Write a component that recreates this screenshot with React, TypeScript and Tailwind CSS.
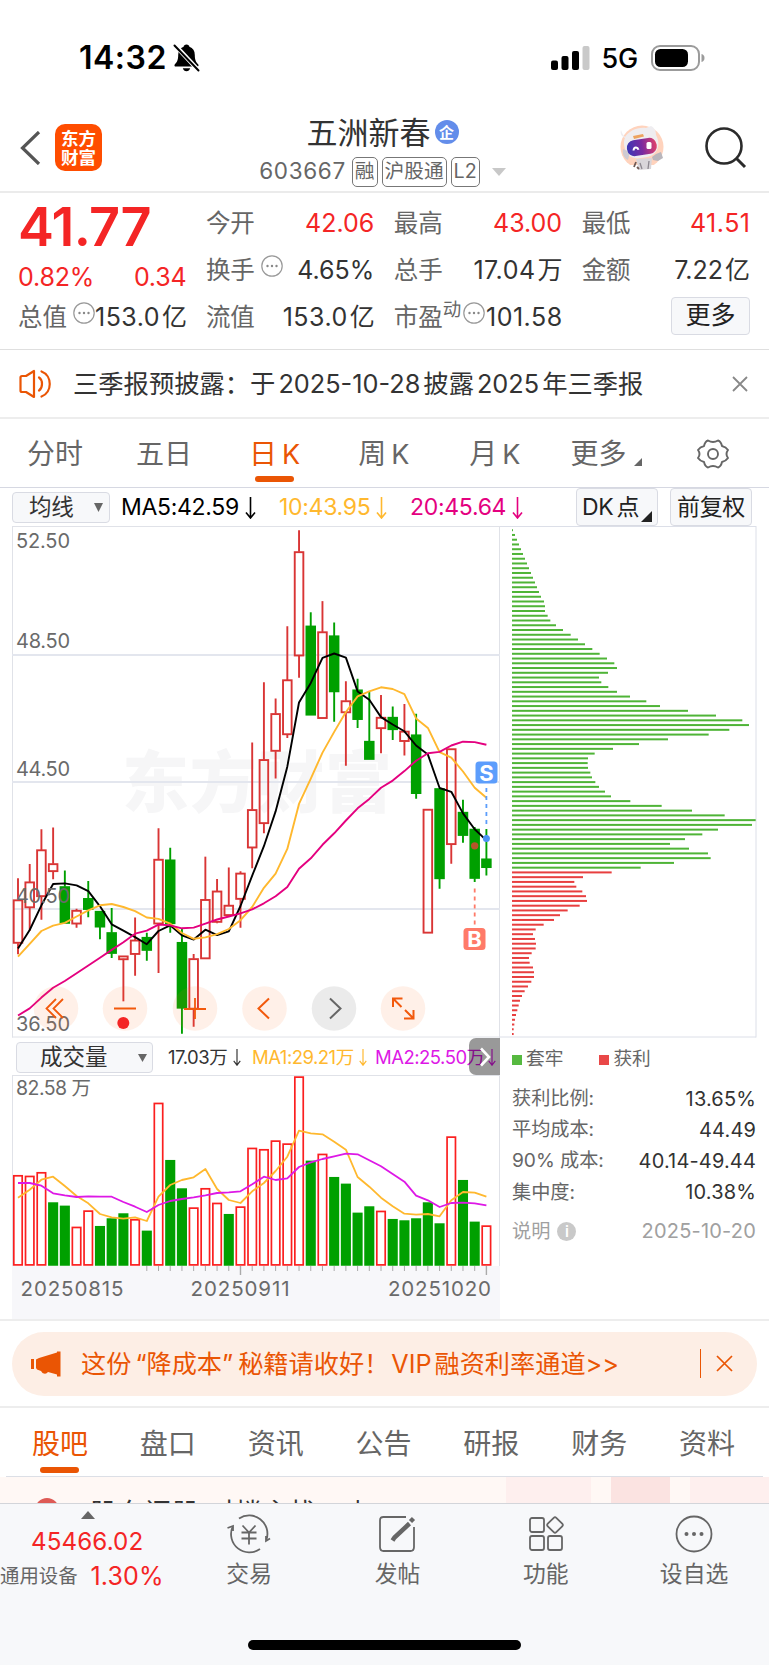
import type { ReactNode } from "react";
import clsx from "clsx";

/**
 * Stock detail page: quote header, daily K chart with chip distribution,
 * volume chart and the bottom toolbar.
 */

// [high, bodyTop, bodyBottom, low, up] in chart units, top to bottom
type Candle = [number, number, number, number, 0 | 1];

const CANDLES: Candle[] = [
  [1060, 1124, 1252, 1285, 1], [1018, 1071, 1147, 1215, 1], [915, 976, 1114, 1183, 1], [910, 1017, 1040, 1063, 1],
  [1037, 1085, 1193, 1193, 0], [1150, 1155, 1195, 1206, 1], [1068, 1120, 1152, 1175, 0], [1158, 1158, 1204, 1240, 0],
  [1148, 1221, 1282, 1296, 0], [1290, 1290, 1298, 1424, 1], [1176, 1243, 1285, 1348, 1], [1221, 1235, 1273, 1304, 0],
  [912, 1004, 1195, 1340, 1], [970, 1006, 1194, 1221, 0], [1208, 1250, 1444, 1520, 0], [1284, 1298, 1447, 1499, 1],
  [996, 1123, 1298, 1298, 1], [1062, 1098, 1190, 1193, 1], [1028, 1140, 1170, 1170, 1], [1039, 1045, 1122, 1206, 1],
  [658, 857, 970, 1030, 1], [480, 709, 898, 927, 1], [528, 573, 684, 765, 1], [314, 473, 635, 645, 1],
  [30, 94, 402, 467, 1], [273, 314, 577, 577, 0], [240, 331, 587, 587, 1], [303, 343, 508, 597, 0],
  [477, 535, 570, 727, 1], [470, 503, 590, 615, 0], [508, 655, 708, 708, 0], [518, 584, 617, 690, 1],
  [552, 584, 620, 651, 0], [544, 625, 655, 697, 1], [573, 636, 809, 825, 0], [856, 856, 1222, 1222, 1],
  [795, 795, 1061, 1091, 0], [677, 677, 960, 1017, 1], [828, 865, 933, 955, 0], [908, 915, 1060, 1071, 0],
  [914, 1003, 1028, 1052, 0],
];

const MA5 = [
  1268, 1213, 1140, 1077, 1075, 1081, 1098, 1143, 1196, 1215, 1234, 1255, 1216, 1199, 1229, 1241, 1212, 1228, 1217, 1142,
  1052, 965, 862, 730, 540, 482, 408, 395, 407, 507, 532, 583, 605, 625, 667, 694, 793, 804, 868, 915, 948,
];
const MA10 = [
  1292, 1254, 1216, 1200, 1192, 1173, 1155, 1140, 1136, 1145, 1157, 1176, 1180, 1194, 1222, 1239, 1235, 1225, 1210, 1184,
  1145, 1088, 1046, 973, 840, 765, 688, 627, 568, 522, 507, 495, 500, 515, 587, 615, 687, 703, 744, 792, 822,
];
const MA20 = [
  1466, 1445, 1413, 1384, 1364, 1341, 1318, 1295, 1272, 1249, 1224, 1215, 1197, 1199, 1208, 1206, 1194, 1182, 1173, 1164,
  1152, 1134, 1113, 1086, 1032, 1001, 961, 927, 889, 853, 825, 792, 771, 743, 712, 690, 686, 667, 656, 657, 665,
];

const CHIPS_LOSS = [
  69, 75, 81, 87, 93, 99, 105, 111, 117, 123, 129, 135, 141, 147, 153, 162, 165, 165, 173, 181, 198, 219, 242, 264, 285,
  307, 329, 351, 373, 381, 354, 327, 334, 355, 381, 420, 469, 510, 594, 678, 757, 777, 718, 656, 534, 447, 369, 314, 294,
  293, 294, 301, 306, 316, 327, 345, 363, 421, 515, 606, 704, 797, 786, 684, 637, 585, 540, 597, 654, 662, 552, 452,
];
const CHIPS_GAIN = [
  365, 279, 253, 259, 277, 288, 291, 269, 233, 210, 192, 161, 137, 129, 135, 138, 137, 125, 117, 119, 129, 132, 132, 124,
  114, 104, 96, 90, 86, 82, 78, 75, 73, 71, 71,
];

// Bar tops; VOL_UP lists the hollow ones
const VOLUME = [
  435, 437, 426, 517, 527, 590, 541, 588, 565, 550, 567, 602, 218, 390, 475, 532, 474, 518, 552, 529, 353, 357, 331, 340,
  139, 392, 371, 441, 461, 548, 529, 542, 567, 571, 565, 517, 580, 319, 450, 575, 586,
];
const VOL_UP = [0, 1, 2, 5, 6, 10, 12, 15, 16, 17, 19, 20, 21, 22, 23, 24, 26, 31, 37, 40];
const VOL_MA1 = [
  503, 479, 449, 440, 468, 498, 520, 552, 562, 566, 562, 573, 500, 465, 450, 442, 417, 477, 510, 519, 484, 459, 423, 380,
  302, 310, 313, 335, 359, 441, 470, 503, 529, 551, 554, 552, 559, 511, 486, 488, 500,
];
const VOL_MA2 = [
  459, 459, 467, 490, 496, 501, 499, 500, 500, 516, 530, 546, 525, 513, 507, 502, 496, 489, 487, 484, 463, 440, 450, 445,
  411, 397, 387, 379, 371, 373, 391, 409, 432, 455, 497, 511, 531, 519, 518, 520, 526,
];

const STEP = 11.71;
const cx = (i: number) => 6 + i * STEP;
const ky = (v: number) => v / 2.9585 - 6;
const vy = (v: number) => (v - 135) / 3;
const points = (values: number[], y: (v: number) => number) =>
  values.map((v, i) => `${cx(i).toFixed(1)},${y(v).toFixed(1)}`).join(" ");

const FONT = "font-[Inter,'Noto_Sans_CJK_SC',sans-serif]";

function StatusBar() {
  return (
    <div className="flex h-[100px] items-center justify-between pr-[64px] pl-[79px] pt-[15px] text-black">
      <div className="flex items-center gap-[6px]">
        <span className="text-[32px] leading-none font-semibold tracking-[0.500px]">14:32</span>
        <svg width="27" height="28" viewBox="0 0 27 28">
          <path
            d="M13.5 0.5c-1.7 0-2.7 1-2.9 2.2C7 3.9 5.200 6.700 5.200 11c0 5.500-1.500 7.300-3.300 9.200-.9 1-.5 2.400 1 2.400h21.200c1.500 0 1.900-1.400 1-2.400-1.800-1.900-3.300-3.700-3.300-9.200 0-4.300-1.800-7.100-5.400-8.300C16.200 1.500 15.200.5 13.500.5zM9.800 24.200c.6 1.900 1.900 3 3.700 3s3.100-1.100 3.700-3z"
          />
          <path d="M0 -1L28 29" stroke="#fff" strokeWidth="4.500" />
          <path d="M1.500 1.500L25.500 26.500" stroke="#000" strokeWidth="2" strokeLinecap="round" />
        </svg>
      </div>
      <div className="flex items-center">
        <svg width="39" height="24" viewBox="0 0 39 24">
          <rect x="0" y="14.500" width="7" height="9.500" rx="2" />
          <rect x="10.500" y="10" width="7" height="14" rx="2" />
          <rect x="21" y="5" width="7" height="19" rx="2" />
          <rect x="31.500" y="0" width="7" height="24" rx="2" fill="#c9c9c9" />
        </svg>
        <span className="ml-[12px] pt-[2px] text-[27px] leading-none font-medium tracking-[-0.200px]">5G</span>
        <svg width="54" height="26" viewBox="0 0 54 26" className="ml-[13px]">
          <rect x="1" y="1" width="47" height="24" rx="8" fill="none" stroke="#9b9b9b" strokeWidth="2" />
          <rect x="4" y="4" width="33" height="18" rx="5.500" />
          <path d="M50.500 9v8c2-.6 3-2 3-4s-1-3.400-3-4z" fill="#9b9b9b" />
        </svg>
      </div>
    </div>
  );
}

function Robot() {
  return (
    <svg width="46" height="46" viewBox="0 0 46 46">
      <defs>
        <linearGradient id="visor" x1="0" x2="1">
          <stop offset="0" stopColor="#3c35b5" />
          <stop offset=".5" stopColor="#7a2aa0" />
          <stop offset="1" stopColor="#e0406a" />
        </linearGradient>
      </defs>
      <circle cx="23" cy="22" r="21.500" fill="#ffd3bd" />
      <path d="M11 40h27l-2 6H14z" fill="#fff" />
      <path d="M17 34l16-1-1 11-12 1z" fill="#d9d6da" />
      <path d="M21 38l2 6M30 36l-1 8" stroke="#8d8890" strokeWidth="1.300" />
      <path d="M33 32l4-3 5-2 2 6-5 3-5-1z" fill="#b9b6bc" />
      <path d="M17 37l-2 5M18 42l2 2" stroke="#6f5a55" strokeWidth="1.800" />
      <path d="M2 5c1 3 2 5 4 7C10 6 18 2 27 3l5-2c4 2 5 6 5 9 5 9 2 20-9 22-8 2-17 2-20-4-3-5-4-11-2-15C2 11 1 8 2 5z" fill="#efedf0" />
      <path d="M4 24c-1 5 1 9 5 11l2-8z" fill="#cfcbd2" />
      <path d="M14 11l10-2 1 2.500-10 2.500z" fill="#eda35f" />
      <rect x="8" y="14" width="30" height="16" rx="7.500" fill="url(#visor)" transform="rotate(-9 23 23)" />
      <path d="M14.500 25.500c.5-4 4-4 5 -.8" fill="none" stroke="#fff" strokeWidth="2" />
      <rect x="27.500" y="17" width="5" height="7" rx="1.500" fill="#fff" />
    </svg>
  );
}

function Tag({ children }: { children: ReactNode }) {
  return (
    <span className="flex h-[30px] items-center rounded-[5px] border border-[#777] px-[2px] text-[19.700px] leading-none text-[#666]">
      {children}
    </span>
  );
}

function Header() {
  return (
    <header className="flex h-[93px] items-center border-b-2 border-[#ebebeb] pr-[22px] pl-[20px] pt-[4px]">
      <div className="flex w-[148px] items-center gap-[14px]">
        <svg width="21" height="34" viewBox="0 0 21 34" fill="none" stroke="#555" strokeWidth="3.200">
          <path d="M19 1L2.500 17L19 33" />
        </svg>
        <div className="flex h-[47px] w-[47px] flex-col items-center justify-center rounded-[10px] bg-[#ff4d00] text-[17.500px] leading-[19px] font-bold text-white">
          <span>东方</span>
          <span>财富</span>
        </div>
      </div>
      <div className="flex flex-1 flex-col items-center pt-[7px]">
        <div className="flex h-[41px] items-center gap-[4px] text-[31px] leading-none text-[#333]">
          五洲新春
          <span className="flex size-[24px] items-center justify-center rounded-full bg-[#638dea] text-[15px] font-bold text-white">
            企
          </span>
        </div>
        <div className="flex h-[38px] items-center text-[22.500px] leading-none tracking-[0.650px] text-[#666]">
          <span className="mr-[6px]">603667</span>
          <div className="flex gap-[4px] tracking-normal">
            <Tag>融</Tag>
            <Tag>沪股通</Tag>
            <Tag>L2</Tag>
          </div>
          <svg width="14" height="8" viewBox="0 0 14 8" fill="#c8c8c8" className="ml-[12px]">
            <path d="M0 0h14L7 8z" />
          </svg>
        </div>
      </div>
      <div className="flex w-[150px] items-center justify-end gap-[40px]">
        <Robot />
        <svg width="42" height="42" viewBox="0 0 42 42" fill="none" stroke="#2b2b2b" strokeWidth="2.600">
          <circle cx="19" cy="19" r="17.500" />
          <path d="M31 31L40 40" strokeWidth="3" />
        </svg>
      </div>
    </header>
  );
}

function Hint() {
  return (
    <svg width="22" height="22" viewBox="0 0 22 22" className="shrink-0">
      <circle cx="11" cy="11" r="10.200" fill="none" stroke="#999" strokeWidth="1.200" />
      <g fill="#888">
        <circle cx="6.500" cy="11" r="1.200" />
        <circle cx="11" cy="11" r="1.200" />
        <circle cx="15.500" cy="11" r="1.200" />
      </g>
    </svg>
  );
}

type StatProps = { label: string; value: string; unit?: string; hint?: boolean; sup?: string; red?: boolean };

function Stat({ label, value, unit, hint, sup, red }: StatProps) {
  return (
    <div className="flex h-[47px] items-center justify-between whitespace-nowrap">
      <span className="flex items-center text-[24.500px] text-[#666]">
        {label}
        {sup && <span className="mb-[16px] text-[18.500px] leading-none">{sup}</span>}
        {hint && <span className={clsx("mb-[10px]", sup ? "ml-[2px]" : "ml-[6px]")}><Hint /></span>}
      </span>
      <span
        className={clsx(
          "text-[25px]",
          value.includes("1") ? "-mr-[0.500px] tracking-[0.500px]" : "tracking-[0px]",
          red ? "text-[#f42525]" : "text-[#333]",
        )}
      >
        {value}
        {unit && <span className="ml-[2px] tracking-normal">{unit}</span>}
      </span>
    </div>
  );
}

function Quote() {
  return (
    <section className="grid h-[157px] grid-cols-4 gap-x-[19.500px] border-b border-[#dfdfdf] pr-[19px] pl-[18px] pt-[7px]">
      <div>
        <div className="h-[61px] text-[54px] leading-[54px] font-semibold tracking-[-0.700px] text-[#f42525]">41.77</div>
        <div className="flex h-[33px] items-center justify-between text-[25px] tracking-[-0.200px] text-[#f42525]">
          <span>0.82%</span>
          <span>0.34</span>
        </div>
        <Stat label="总值" value="153.0" unit="亿" hint />
      </div>
      <div>
        <Stat label="今开" value="42.06" red />
        <Stat label="换手" value="4.65%" hint />
        <Stat label="流值" value="153.0" unit="亿" />
      </div>
      <div>
        <Stat label="最高" value="43.00" red />
        <Stat label="总手" value="17.04" unit="万" />
        <Stat label="市盈" sup="动" value="101.58" hint />
      </div>
      <div>
        <Stat label="最低" value="41.51" red />
        <Stat label="金额" value="7.22" unit="亿" />
        <div className="flex h-[43px] items-center justify-end">
          <button className="h-[38px] w-[79px] rounded-[4px] border border-[#d9dbe3] bg-[#f7f8fa] text-[25px] leading-none text-[#222]">
            更多
          </button>
        </div>
      </div>
    </section>
  );
}

function Notice() {
  return (
    <section className="flex h-[69px] items-center border-b-2 border-[#ededed] pr-[21px] pl-[19px]">
      <svg width="34" height="30" viewBox="0 0 34 30" fill="none" stroke="#ea5504" strokeWidth="2.200" strokeLinejoin="round">
        <path d="M1.500 8.500Q1.500 7 3 7H7L15 2V28L7 23H3Q1.500 23 1.500 21.500Z" />
        <path d="M20 8.500c4 2.500 4 10.500 0 13M22.500 2.500c11 4 11 21 0 25" strokeLinecap="round" />
      </svg>
      <span className="ml-[20px] text-[25.300px] text-[#333]">
        三季报预披露：于<span className="mx-[3px]">2025-10-28</span>披露<span className="mx-[3px]">2025</span>年三季报
      </span>
      <svg width="16" height="16" viewBox="0 0 16 16" stroke="#888" strokeWidth="1.800" className="ml-auto">
        <path d="M1 1L15 15M15 1L1 15" />
      </svg>
    </section>
  );
}

function PeriodTabs() {
  return (
    <nav className="flex h-[69px] items-center border-b border-[#d6d8e2] pr-[40px] pl-[27px] pt-px text-[28px] leading-none whitespace-nowrap text-[#666]">
      <span>分时</span>
      <span className="ml-[53px]">五日</span>
      <span className="relative ml-[57px] text-[#ea5504]">
        日<span className="ml-[5px] text-[27px]">K</span>
        <i className="absolute -bottom-[14px] left-[6px] h-[6px] w-[39px] rounded-full bg-[#ea5504]" />
      </span>
      <span className="ml-[58px]">周<span className="ml-[5px] text-[27px]">K</span></span>
      <span className="ml-[60px]">月<span className="ml-[5px] text-[27px]">K</span></span>
      <span className="ml-[50px]">更多</span>
      <svg width="8" height="8" viewBox="0 0 8 8" fill="#666" className="mt-[17px] ml-[7px]">
        <path d="M8 0V8H0z" />
      </svg>
      <svg width="32" height="30" viewBox="0 0 32 30" fill="none" stroke="#666" strokeWidth="1.900" strokeLinejoin="round" className="ml-auto">
        <path d="M11 1.500Q16 4.500 21 1.500Q24 2.500 25 7Q29 8 31 11Q28 15 31 19Q29 22 25 23Q24 27.500 21 28.500Q16 25.500 11 28.500Q8 27.500 7 23Q3 22 1 19Q4 15 1 11Q3 8 7 7Q8 2.500 11 1.500Z" />
        <circle cx="16" cy="15" r="5" />
      </svg>
    </nav>
  );
}

function DownArrow({ small }: { small?: boolean }) {
  return (
    <svg
      width={small ? 8 : 11}
      height={small ? 17 : 22}
      viewBox="0 0 11 22"
      fill="none"
      stroke="currentColor"
      strokeWidth="1.600"
      preserveAspectRatio="none"
    >
      <path d="M5.500 0V21M1 15.500L5.500 21L10 15.500" />
    </svg>
  );
}

function MaBar() {
  return (
    <div className="flex h-[38px] items-center pr-[17px] pl-[12px] text-[23px] leading-none tracking-[-0.300px] whitespace-nowrap">
      <button className="flex h-[31px] w-[98px] items-center justify-between rounded-[4px] border border-[#d9dbe3] bg-[#f7f8fa] pr-[6px] pl-[16px] text-[22.500px] leading-none text-[#333]">
        均线
        <svg width="9" height="9" viewBox="0 0 9 9" fill="#666"><path d="M0 0h9L4.500 9z" /></svg>
      </button>
      <span className="ml-[11px] flex w-[158px] items-center gap-[6px] pt-px text-black">MA5:42.59<DownArrow /></span>
      <span className="flex w-[131px] items-center gap-[6px] pt-px text-[#ffb82e]">10:43.95<DownArrow /></span>
      <span className="flex items-center gap-[6px] pt-px text-[#e4007f]">20:45.64<DownArrow /></span>
      <button className="relative ml-auto h-[38px] w-[82px] rounded-[4px] border border-[#d9dbe3] bg-[#f7f8fa] pr-[13px] text-[23px] leading-none text-[#222]">
        DK<span className="ml-[3px]">点</span>
        <svg width="11" height="11" viewBox="0 0 11 11" fill="#222" className="absolute right-[5px] bottom-[3px]">
          <path d="M11 0V11H0z" />
        </svg>
      </button>
      <button className="ml-[12px] h-[38px] w-[82px] rounded-[4px] border border-[#d9dbe3] bg-[#f7f8fa] text-[23px] leading-none text-[#222]">
        前复权
      </button>
    </div>
  );
}

const AXIS = [
  { label: "52.50", y: 22 },
  { label: "48.50", y: 122 },
  { label: "44.50", y: 250 },
  { label: "40.50", y: 376.5 },
  { label: "36.50", y: 504.5 },
];

function Marker({ x, y, color, label }: { x: number; y: number; color: string; label: string }) {
  return (
    <g>
      <rect x={x - 11} y={y - 11} width="22" height="22" rx="3.500" fill={color} />
      <text x={x} y={y + 8} textAnchor="middle" fontSize="22" fontWeight="700" fill="#fff">{label}</text>
    </g>
  );
}

function KChart() {
  return (
    <svg width="488" height="512" viewBox="0 0 488 512" className="block shrink-0">
      <text x="110" y="281" fontSize="67" fontWeight="900" textLength="270" fill="#f6f6f7">东方财富</text>
      <g stroke="#e3e6ee" fill="none">
        <path d="M0 0.500H488M0.500 0V511.500M0 511H488M487.500 0V512" stroke="#e0e2e8" />
        <path d="M0 129H488M0 256H488M0 383H488" strokeWidth="2" />
      </g>
      {CANDLES.map(([high, top, bottom, low, up], i) => {
        const x = cx(i);
        const color = up ? "#d93535" : "#00a000";
        return (
          <g key={i} stroke={color} strokeWidth="1.900">
            <path d={`M${x} ${ky(high)}V${ky(top)}M${x} ${ky(bottom)}V${ky(low)}`} />
            <rect
              x={x - 4.3}
              y={ky(top) + 0.4}
              width="8.600"
              height={Math.max(ky(bottom) - ky(top) - 0.8, 2.8)}
              fill={up ? "none" : color}
            />
          </g>
        );
      })}
      <g fill="none" strokeWidth="1.900" strokeLinejoin="round">
        <polyline points={points(MA5, ky)} stroke="#000" />
        <polyline points={points(MA10, ky)} stroke="#ffb82e" />
        <polyline points={points(MA20, ky)} stroke="#e4007f" />
      </g>
      <path d={`M${cx(40)} ${ky(793)}V${ky(905)}`} stroke="#5c9dfc" strokeWidth="1.800" strokeDasharray="4 4" />
      <path d={`M${cx(39)} ${ky(1090)}V${ky(1200)}`} stroke="#ff7a68" strokeWidth="1.800" strokeDasharray="4 4" />
      <circle cx={cx(40)} cy={ky(942)} r="3.500" fill="#4b93f5" />
      <circle cx={cx(39)} cy={ky(964)} r="3.700" fill="#b5552a" />
      <Marker x={474.5} y={246.5} color="#5c9dfc" label="S" />
      <Marker x={462.5} y={413} color="#ff7a68" label="B" />
      <g fontSize="20" fill="#6a6a6a">
        {AXIS.map((a) => (
          <text key={a.label} x="4" y={a.y} textLength="54">{a.label}</text>
        ))}
      </g>
      <g fill="#ff6a1a" fillOpacity=".1">
        <circle cx="44" cy="482.500" r="22.300" />
        <circle cx="113" cy="482.500" r="22.300" />
        <circle cx="183" cy="482.500" r="22.300" />
        <circle cx="252.500" cy="482.500" r="22.300" />
        <circle cx="322" cy="482.500" r="22.300" fill="#000" fillOpacity=".08" />
        <circle cx="391" cy="482.500" r="22.300" />
      </g>
      <g fill="none" stroke="#f2590c" strokeWidth="1.800">
        <path d="M44 473L34.500 482.500L44 492M51 473L41.500 482.500L51 492" />
        <path d="M102 482.500H124M172 483H194M183 472V493" />
        <path d="M257 472.500L246.500 482.500L257 492.500" strokeWidth="2" />
        <path d="M318 472.500L328.500 482.500L318 492.500" strokeWidth="2" stroke="#666" />
        <path d="M381 481V472.500H390.500M381 472.500L389.500 481M393 484L401.500 492.500M401.500 484V492.500H392" strokeWidth="2" />
      </g>
      <circle cx="111.300" cy="497" r="6" fill="#f42525" />
    </svg>
  );
}

function ChipChart() {
  return (
    <svg width="257" height="512" viewBox="0 0 257 512" className="block shrink-0">
      <path d="M0 0.500H256M256 0V511.500M0 511H256" fill="none" stroke="#dcdfe8" />
      {[...CHIPS_LOSS, ...CHIPS_GAIN].map((end, i) => (
        <rect
          key={i}
          x="12"
          y={3.2 + i * 4.753}
          width={(end - 66) / 3}
          height="2"
          fill={i < CHIPS_LOSS.length ? "#4fb437" : "#e83f3f"}
        />
      ))}
    </svg>
  );
}

function VolumeHeader() {
  return (
    <div className="relative flex h-[37px] items-center overflow-hidden pl-[4px] pt-[2px] text-[18.500px] leading-none tracking-[-0.500px] whitespace-nowrap">
      <button className="flex h-[31px] w-[137px] items-center justify-between rounded-[4px] border border-[#d9dbe3] bg-[#f7f8fa] pr-[5px] pl-[23px] text-[22.500px] leading-none tracking-normal text-[#333]">
        成交量
        <svg width="9" height="8" viewBox="0 0 9 8" fill="#666"><path d="M0 0h9L4.500 8z" /></svg>
      </button>
      <span className="ml-[15px] flex w-[84px] items-center gap-[6px] text-[#333]">17.03万<DownArrow small /></span>
      <span className="flex w-[123px] items-center gap-[5px] text-[#ffb82e]">MA1:29.21万<DownArrow small /></span>
      <span className="flex items-center gap-[3px] text-[#dd18e6]">MA2:25.50万<DownArrow small /></span>
      <span className="absolute top-0 right-0 flex h-full w-[31px] items-center justify-center rounded-l-[7px] bg-black/40">
        <svg width="12" height="20" viewBox="0 0 12 20" fill="none" stroke="#fff" strokeWidth="2.600">
          <path d="M2 1.500L10 10L2 18.500" />
        </svg>
      </span>
    </div>
  );
}

function VolumeChart() {
  const base = 190.5;
  return (
    <svg width="488" height="244" viewBox="0 0 488 244" className="block">
      <rect x="0" y="191" width="488" height="53" fill="#f7f7fa" />
      <path d="M0 0.500H488M0.500 0V191M487.500 0V191" fill="none" stroke="#e0e2e8" />
      {VOLUME.map((v, i) => {
        const up = VOL_UP.includes(i);
        return (
          <rect
            key={i}
            x={cx(i) - 4.2}
            y={vy(v) + 0.8}
            width="8.400"
            height={base - vy(v) - 1.4}
            fill={up ? "#fff" : "#00a000"}
            stroke={up ? "#fb1f1f" : "#00a000"}
            strokeWidth="1.700"
          />
        );
      })}
      <g fill="none" strokeWidth="1.800" strokeLinejoin="round">
        <polyline points={points(VOL_MA1, vy)} stroke="#ffb82e" />
        <polyline points={points(VOL_MA2, vy)} stroke="#dd18e6" />
      </g>
      {VOLUME.map((_, i) =>
        i < 11 ? null : (
          <path
            key={i}
            d={`M${cx(i)} 191V${i === 19 || i === 40 ? 200 : 196}`}
            stroke="#aaa"
            strokeWidth={i === 19 || i === 40 ? 1.4 : 1}
          />
        ),
      )}
      <g fontSize="20.500" fill="#6a6a6a">
        <text x="4" y="20" fontSize="19.500" textLength="75">82.58 万</text>
        <text x="8.500" y="221" textLength="103">20250815</text>
        <text x="178.500" y="221" textLength="99">20250911</text>
        <text x="376" y="221" textLength="103">20251020</text>
      </g>
    </svg>
  );
}

const CHIP_INFO = [
  { label: "获利比例:", value: "13.65%" },
  { label: "平均成本:", value: "44.49" },
  { label: "90% 成本:", value: "40.14-49.44" },
  { label: "集中度:", value: "10.38%" },
];

function ChipInfo() {
  return (
    <div className="flex flex-1 flex-col pr-[13px] pl-[12px] text-[19.200px] leading-none text-[#666]">
      <div className="flex h-[43px] items-center text-[18.700px]">
        <i className="size-[10px] bg-[#56b940]" />
        <span className="ml-[4px]">套牢</span>
        <i className="ml-[36px] size-[10px] bg-[#e94848]" />
        <span className="ml-[4px]">获利</span>
      </div>
      <dl className="mt-[2px]">
        {CHIP_INFO.map((row) => (
          <div key={row.label} className="flex h-[31.200px] items-center justify-between">
            <dt className="tracking-[-0.050px]">{row.label}</dt>
            <dd className="text-[20px] tracking-[0.150px] text-[#333]">{row.value}</dd>
          </div>
        ))}
      </dl>
      <div className="mt-[8px] flex h-[31px] items-center text-[#a0a0a0]">
        说明
        <span className="ml-[7px] flex size-[19px] items-center justify-center rounded-full bg-[#c9c9c9] text-[15px] font-semibold text-white">i</span>
        <span className="ml-auto text-[20px] tracking-[0.200px]">2025-10-20</span>
      </div>
    </div>
  );
}

function Banner() {
  return (
    <section className="border-y-2 border-[#ededed] px-[12px] py-[10.500px]">
      <div className="flex h-[64px] items-center rounded-[32px] bg-[#fdeee5] pr-[24px] pl-[19px] text-[#ea5504]">
        <svg width="30" height="26" viewBox="0 0 30 26" fill="#ea5504">
          <path d="M0 8h3v10H0zM5 8.500L8 7L26 1.500V0.500H29.500V25.500H26V23.500L17 21Q15 24 11.500 22L10 20L6 18.500L5 17z" />
        </svg>
        <span className="ml-[20px] pt-[2px] text-[25.200px] leading-none whitespace-nowrap">
          这份<span className="ml-[4px]">“</span>降成本<span className="mr-[5px]">”</span>秘籍请收好！<span className="ml-[2px]">VIP</span><span className="ml-[3px]">融资利率通道</span>&gt;&gt;
        </span>
        <i className="ml-auto h-[29px] w-[1.500px] bg-[#ea5504]" />
        <svg width="17" height="17" viewBox="0 0 17 17" stroke="#ea5504" strokeWidth="1.700" className="ml-[15px]">
          <path d="M1 1L16 16M16 1L1 16" />
        </svg>
      </div>
    </section>
  );
}

const SECTIONS = ["股吧", "盘口", "资讯", "公告", "研报", "财务", "资料"];

function SectionTabs() {
  return (
    <nav className="mx-[6px] flex h-[69px] items-center justify-between border-b border-[#dcdfe6] pr-[28px] pl-[26px] pt-[3px] text-[28px] leading-none text-[#666]">
      {SECTIONS.map((name, i) => (
        <span key={name} className={clsx("relative", i === 0 && "text-[#ea5504]")}>
          {name}
          {i === 0 && <i className="absolute -bottom-[15px] left-[8px] h-[6px] w-[39px] rounded-full bg-[#ea5504]" />}
        </span>
      ))}
    </nav>
  );
}

function PostPeek() {
  return (
    <div className="relative flex h-[26px] items-start overflow-hidden bg-[#fff8f5]">
      <i className="absolute top-0 left-[506px] h-full w-[85px] bg-[#feefee]" />
      <i className="absolute top-0 left-[611px] h-full w-[59px] bg-[#fbe3e1]" />
      <i className="absolute top-0 left-[690px] h-full w-[79px] bg-[#feefee]" />
      <i className="mt-[21px] ml-[35px] size-[24px] shrink-0 rounded-full bg-[#de5a55]" />
      <span className="mt-[23px] ml-[31px] text-[27px] leading-none tracking-[0.400px] text-[#333]">股东问股 对楼主找　点</span>
    </div>
  );
}

function ToolItem({ label, children }: { label: string; children: ReactNode }) {
  return (
    <div className="flex w-[148.300px] flex-col items-center gap-[9px] pt-[10px] text-[22.800px] leading-none text-[#666]">
      <svg width="44" height="40" viewBox="0 0 44 40" fill="none" stroke="#666" strokeWidth="1.800">
        {children}
      </svg>
      <span>{label}</span>
    </div>
  );
}

function Toolbar() {
  return (
    <footer className="relative h-[163px] border-t border-[#d3d5da] bg-[#f7f8fa]">
      <div className="flex">
        <div className="w-[175px]">
          <svg width="14" height="8" viewBox="0 0 14 8" fill="#666" className="mt-[7px] ml-[81px]">
            <path d="M7 0L14 8H0z" />
          </svg>
          <div className="mt-[11px] ml-[31px] text-[24.200px] leading-none tracking-[0.100px] text-[#f42525]">45466.02</div>
          <div className="mt-[10px] flex items-center whitespace-nowrap">
            <span className="text-[19.400px] leading-none text-[#666]">通用设备</span>
            <span className="ml-[13px] text-[25px] leading-none tracking-[0.100px] text-[#f42525]">1.30%</span>
          </div>
        </div>
        <ToolItem label="交易">
          <path d="M12 4.500A18.300 18.300 0 0 1 39.500 25.500M33 35A18.300 18.300 0 0 1 5.500 13" />
          <path d="M0.500 14L6 12V17M43 24.500L39 27V22" />
          <path d="M15.500 11.500L22 18.500L28.500 11.500M22 18.500V30.500M14.500 18.500H29.500M14.500 24.500H29.500" />
        </ToolItem>
        <ToolItem label="发帖">
          <path d="M31 3H8.500Q5 3 5 6.500V33Q5 37 8.500 37H35.500Q39 37 39 33V13" />
          <path d="M34.500 9.500L19.500 23.500L17.500 26.500" strokeWidth="4.500" />
          <path d="M35.500 7.500L38.500 4.500" strokeWidth="4.500" />
        </ToolItem>
        <ToolItem label="功能">
          <rect x="6" y="4" width="14" height="14" rx="2" />
          <rect x="6" y="22" width="14" height="14" rx="2" />
          <rect x="24" y="22" width="14" height="14" rx="2" />
          <rect x="25" y="5" width="12" height="12" rx="1.800" transform="rotate(45 31 11)" />
        </ToolItem>
        <ToolItem label="设自选">
          <circle cx="22" cy="20" r="17.500" />
          <g fill="#666" stroke="none">
            <circle cx="14.500" cy="20" r="2" />
            <circle cx="22" cy="20" r="2" />
            <circle cx="29.500" cy="20" r="2" />
          </g>
        </ToolItem>
      </div>
      <i className="absolute bottom-[16px] left-[248px] h-[10px] w-[273px] rounded-full bg-black" />
    </footer>
  );
}

export default function App() {
  return (
    <div className={clsx("w-[769px] overflow-hidden bg-white", FONT)}>
      <StatusBar />
      <Header />
      <Quote />
      <Notice />
      <PeriodTabs />
      <MaBar />
      <div className="flex pl-[12px]">
        <KChart />
        <ChipChart />
      </div>
      <div className="flex h-[281px] pl-[12px]">
        <div className="w-[488px] shrink-0">
          <VolumeHeader />
          <VolumeChart />
        </div>
        <ChipInfo />
      </div>
      <Banner />
      <SectionTabs />
      <PostPeek />
      <Toolbar />
    </div>
  );
}
